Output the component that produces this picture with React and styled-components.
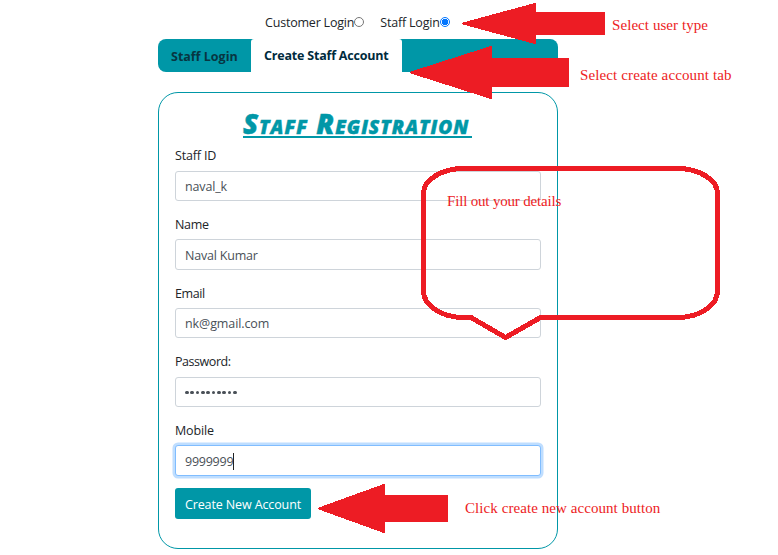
import React from "react";
import styled, { createGlobalStyle } from "styled-components";

const TEAL = "#0097a7";
const RED = "#ed1c24";

const GlobalStyle = createGlobalStyle`
  *, *::before, *::after { box-sizing: border-box; }
  html, body { margin: 0; padding: 0; background: #fff; overflow: hidden; }
  body { font-family: "Open Sans", "Noto Sans", sans-serif; color: #212529; font-size: 12.5px; line-height: 19px; }
`;

const Page = styled.div`
  position: relative;
  width: 778px;
  height: 555px;
  overflow: hidden;
  background: #fff;
`;

const Content = styled.main`
  width: 400px;
  margin-left: 158px;
  padding-top: 12px;
`;

const UserTypes = styled.div`
  display: flex;
  gap: 16px;
  height: 27px;
  padding-left: 107px;
`;

const UserType = styled.label`
  display: flex;
  height: 20px;
  align-items: center;
  white-space: nowrap;
  letter-spacing: ${(p) => p.$spacing};
`;

const Radio = styled.span`
  width: 10px;
  height: 10px;
  border-radius: 50%;
  border: 1px solid ${(p) => (p.$checked ? "#0075ff" : "#767676")};
  background: ${(p) => (p.$checked ? "radial-gradient(circle, #0075ff 0 3px, #fff 3.5px)" : "#fff")};
`;

const Tabs = styled.nav`
  display: flex;
  height: 33px;
  border-radius: 8px;
  overflow: hidden;
  background: ${TEAL};
`;

const Tab = styled.div`
  width: ${(p) => p.$width};
  padding: 7px 0 0 13px;
  border: 1px solid ${(p) => (p.$active ? "#dee2e6 #dee2e6 #fff" : "transparent")};
  border-width: 1px ${(p) => (p.$active ? "1px" : "0")} 0;
  border-color: ${(p) => (p.$active ? "#dee2e6" : "transparent")};
  border-radius: 3px 3px 0 0;
  background: ${(p) => (p.$active ? "#fff" : "transparent")};
  color: ${(p) => (p.$active ? "#002b3d" : "#073642")};
  font-weight: 700;
  white-space: nowrap;
  letter-spacing: ${(p) => p.$spacing};
`;

const Card = styled.form`
  height: 457px;
  margin-top: 20px;
  padding: 18px 16px 0;
  border: 1px solid ${TEAL};
  border-radius: 20px;
`;

const Title = styled.h1`
  width: 229px;
  height: 27px;
  margin: 0 0 7.6px 68px;
  border-bottom: 2px solid ${TEAL};
  color: ${TEAL};
  font-family: "Open Sans", sans-serif;
  font-size: 27.5px;
  font-weight: 800;
  font-style: italic;
  font-variant-caps: small-caps;
  line-height: 26px;
  letter-spacing: 1.02px;
  white-space: nowrap;
  -webkit-text-stroke: 0.5px ${TEAL};
`;

const Field = styled.div`
  height: 68.6px;
`;

const Label = styled.label`
  display: block;
  height: 25.2px;
  padding-top: 0.8px;
  letter-spacing: ${(p) => p.$spacing};
`;

const Input = styled.div`
  display: flex;
  align-items: center;
  height: 30.4px;
  padding: 1.4px 9px 0;
  border: 1px solid ${(p) => (p.$focused ? "#80bdff" : "#ced4da")};
  border-radius: 3px;
  color: #495057;
  background: #fff;
  letter-spacing: ${(p) => p.$spacing};
  box-shadow: ${(p) => (p.$focused ? "0 0 0 2.5px rgba(0, 123, 255, 0.25)" : "none")};
`;

const Dots = styled.span`
  display: flex;
  gap: 1.75px;
`;

const Dot = styled.i`
  width: 3.6px;
  height: 3.6px;
  border-radius: 50%;
  background: #495057;
`;

const Caret = styled.span`
  width: 1px;
  height: 17px;
  background: #222;
`;

const Submit = styled.button`
  display: block;
  width: 136px;
  height: 31px;
  margin-top: -0.4px;
  padding: 1px 0 0;
  border: 0;
  border-radius: 3px;
  background: ${TEAL};
  color: #fff;
  font: inherit;
  letter-spacing: -0.12px;
  white-space: nowrap;
`;

const Markup = styled.svg`
  position: absolute;
  inset: 0;
  pointer-events: none;
`;

const Note = styled.p`
  position: absolute;
  left: ${(p) => p.$x};
  top: ${(p) => p.$y};
  margin: 0;
  color: ${RED};
  font: 15px/18px "Liberation Serif", serif;
  letter-spacing: ${(p) => p.$spacing};
  white-space: nowrap;
`;

const fields = [
  { label: "Staff ID", value: "naval_k", labelSpacing: "-0.15px", spacing: "-0.15px" },
  { label: "Name", value: "Naval Kumar", labelSpacing: "-0.3px", spacing: "-0.2px" },
  { label: "Email", value: "nk@gmail.com", labelSpacing: "-0.4px", spacing: "-0.1px" },
  { label: "Password:", secret: 10, labelSpacing: "-0.45px" },
  { label: "Mobile", value: "9999999", focused: true, labelSpacing: "-0.15px", spacing: "-0.25px" },
];

function FormField({ label, value, secret, focused, labelSpacing, spacing }) {
  return (
    <Field>
      <Label $spacing={labelSpacing}>{label}</Label>
      <Input $focused={focused} $spacing={spacing}>
        {secret ? <Dots>{Array.from({ length: secret }, (_, i) => <Dot key={i} />)}</Dots> : <span>{value}</span>}
        {focused && <Caret />}
      </Input>
    </Field>
  );
}

export default function App() {
  return (
    <Page>
      <GlobalStyle />
      <Content>
        <UserTypes>
          <UserType $spacing="-0.2px">Customer Login<Radio /></UserType>
          <UserType $spacing="-0.2px">Staff Login<Radio $checked /></UserType>
        </UserTypes>
        <Tabs>
          <Tab $width="93px">Staff Login</Tab>
          <Tab $width="151px" $active $spacing="-0.2px">Create Staff Account</Tab>
        </Tabs>
        <Card>
          <Title>Staff Registration</Title>
          {fields.map((f) => <FormField key={f.label} {...f} />)}
          <Submit type="button">Create New Account</Submit>
        </Card>
      </Content>
      <Markup width="778" height="555" viewBox="0 0 778 555" shapeRendering="crispEdges">
        <g fill={RED} stroke={RED} strokeWidth="2" strokeLinejoin="round">
          <path d="M463 23.5L535 4V13H604V34H535V43Z" />
          <path d="M411 72.5L491 47V59H568V86H491V98Z" />
          <path d="M319 508.5L384 485V496H447V521H384V532Z" />
        </g>
        <path
          d="M464 168.5H677A40.5 25 0 0 1 717.5 193.5V291A40.5 26.5 0 0 1 677 317.5H540.5L505.5 337.5L471 317.5H464A40.5 26.5 0 0 1 423.5 291V193.5A40.5 25 0 0 1 464 168.5Z"
          fill="none" stroke={RED} strokeWidth="5" strokeLinejoin="round"
        />
      </Markup>
      <Note $x="612px" $y="16px" $spacing="0.07px">Select user type</Note>
      <Note $x="580px" $y="66px" $spacing="0.12px">Select create account tab</Note>
      <Note $x="447px" $y="192px" $spacing="-0.18px">Fill out your details</Note>
      <Note $x="465px" $y="499px" $spacing="0.07px">Click create new account button</Note>
    </Page>
  );
}
